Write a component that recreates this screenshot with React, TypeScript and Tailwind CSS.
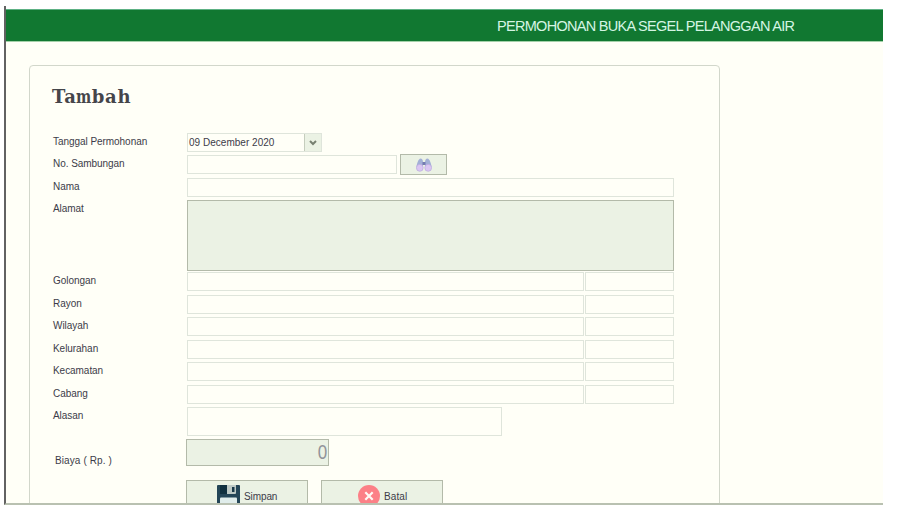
import type { ReactNode } from "react";

const field = "border border-[#dfe5db] bg-[#fffff7]";
const raised = "border border-[#b3baa9] bg-[#ebf2e4]";

function Row({ label, height, children }: { label: string; height: string; children: ReactNode }) {
  return (
    <div className={`flex items-start ${height}`}>
      <label className="w-[134px] shrink-0 whitespace-nowrap pt-px text-[10px] leading-4 tracking-[-0.05px]">{label}</label>
      {children}
    </div>
  );
}

function Binoculars() {
  return (
    <svg width="16" height="14" viewBox="0 0 16 14">
      <path d="M4.500 0.500C2.500 1 0.800 5 0.500 9h6.500V4.500C7 2 6 .5 4.500 .5z" fill="#a3b0d6" />
      <path d="M11.500 0.500c2 .5 3.700 4.500 4 8.500H9V4.500C9 2 10 .5 11.500 .5z" fill="#a3b0d6" />
      <path d="M6.500 4h3v3h-3z" fill="#747bb0" />
      <ellipse cx="3.800" cy="9.800" rx="3.400" ry="3.500" fill="#dac6f2" stroke="#b3a3dc" strokeWidth=".6" />
      <ellipse cx="12.200" cy="9.800" rx="3.400" ry="3.500" fill="#dac6f2" stroke="#b3a3dc" strokeWidth=".6" />
    </svg>
  );
}

function Floppy() {
  return (
    <svg width="23" height="23" viewBox="0 0 23 23" className="shrink-0">
      <path d="M1 0h21a1 1 0 0 1 1 1v21a1 1 0 0 1-1 1H1a1 1 0 0 1-1-1V1a1 1 0 0 1 1-1z" fill="#234557" />
      <path d="M3 0h8v9H3z" fill="#10303f" />
      <path d="M10 0h9v8a1 1 0 0 1-1 1h-8z" fill="#bdc9c5" />
      <path d="M15 2h2.500v5H15z" fill="#183848" />
      <path d="M4 12.500h15a1 1 0 0 1 1 1V23H3v-9.500a1 1 0 0 1 1-1z" fill="#e0edeb" />
    </svg>
  );
}

function Cancel() {
  return (
    <svg width="22" height="22" viewBox="0 0 22 22" className="shrink-0">
      <circle cx="11" cy="11" r="11" fill="#fc8087" />
      <path d="M7.300 7.300l7.400 7.400M14.700 7.300l-7.400 7.400" stroke="#fff9f5" strokeWidth="2.200" />
    </svg>
  );
}

const pairs = [
  { label: "Golongan", height: "h-[23px]" },
  { label: "Rayon", height: "h-[22px]" },
  { label: "Wilayah", height: "h-[23px]" },
  { label: "Kelurahan", height: "h-[22px]" },
  { label: "Kecamatan", height: "h-[23px]" },
  { label: "Cabang", height: "h-[22px]" },
];

export default function App() {
  return (
    <div className="h-[514px] w-[899px] overflow-hidden bg-white pl-1 pt-1.5 font-['Liberation_Sans',Arial,sans-serif] text-[#3c3c49]">
      <div className="flex h-[499px] w-[879px] flex-col overflow-hidden border-b-2 border-l-2 border-b-[#b9c1b1] border-l-[#626262]">
        <div className="h-[3px] shrink-0 bg-white" />
        <header className="flex h-[33px] shrink-0 items-center border-y border-t-[#5db184] border-b-[#a4d1a9] bg-[#117831] pl-[491px]">
          <h1 className="whitespace-nowrap text-[14.5px] leading-5 tracking-[-0.7px] text-[#d5f5e4]">PERMOHONAN BUKA SEGEL PELANGGAN AIR</h1>
        </header>
        <main className="min-h-0 flex-1 overflow-hidden bg-[#fffff7] pl-[23px] pt-[23px]">
          <section className="h-[560px] w-[691px] rounded-[4px] border border-[#d2d7cb] pl-[23px] pt-[19px]">
            <h2 className="-ml-px h-[48px] whitespace-nowrap font-['DejaVu_Serif',serif] text-[18px] font-bold leading-6 tracking-[0.7px] text-[#45454a]">
              Ta<span className="-ml-[2.5px] -mr-[1.5px] inline-block scale-x-[0.8] tracking-normal">m</span>bah
            </h2>
            <Row label="Tanggal Permohonan" height="h-[22px]">
              <div className={`${field} flex h-[19px] w-[135px]`}>
                <span className="flex-1 whitespace-nowrap pl-px text-[10px] leading-[17px] tracking-[0.02px]">09 December 2020</span>
                <span className="flex w-[17px] items-center justify-center border-l border-[#c5cdbd] bg-[#ebf2e4]">
                  <svg width="8" height="6" viewBox="0 0 8 6"><path d="M1 1l3 3 3-3" fill="none" stroke="#778071" strokeWidth="2" /></svg>
                </span>
              </div>
            </Row>
            <Row label="No. Sambungan" height="h-[23px]">
              <div className={`${field} h-[19px] w-[210px]`} />
              <button className={`${raised} -mt-px ml-[3px] flex h-[21px] w-[47px] items-center justify-center`}><Binoculars /></button>
            </Row>
            <Row label="Nama" height="h-[22px]"><div className={`${field} h-[19px] w-[487px]`} /></Row>
            <Row label="Alamat" height="h-[72px]"><div className={`${raised} h-[71px] w-[487px]`} /></Row>
            {pairs.map(({ label, height }) => (
              <Row key={label} label={label} height={height}>
                <div className={`${field} h-[19px] w-[397px]`} />
                <div className={`${field} ml-px h-[19px] w-[89px]`} />
              </Row>
            ))}
            <Row label="Alasan" height="h-[32px]"><div className={`${field} h-[29px] w-[315px]`} /></Row>
            <div className="flex h-[41px] items-start">
              <label className="w-[133px] pl-0.5 pt-3.5 text-[10px] leading-4 tracking-[0.1px]">Biaya ( Rp. )</label>
              <div className={`${raised} flex h-[27px] w-[143px] items-center justify-end pb-0.5 pr-px text-[20px] text-[#92949a]`}>
                <span className="origin-right scale-x-[0.85]">0</span>
              </div>
            </div>
            <div className="flex gap-[13px] pl-[133px]">
              <button className={`${raised} flex h-[32px] w-[122px] items-center pl-[30px] text-[10px] tracking-[-0.1px]`}>
                <Floppy /><span className="ml-1">Simpan</span>
              </button>
              <button className={`${raised} flex h-[32px] w-[122px] items-center pl-9 text-[10px] tracking-[0.1px]`}>
                <Cancel /><span className="ml-1">Batal</span>
              </button>
            </div>
          </section>
        </main>
      </div>
    </div>
  );
}
